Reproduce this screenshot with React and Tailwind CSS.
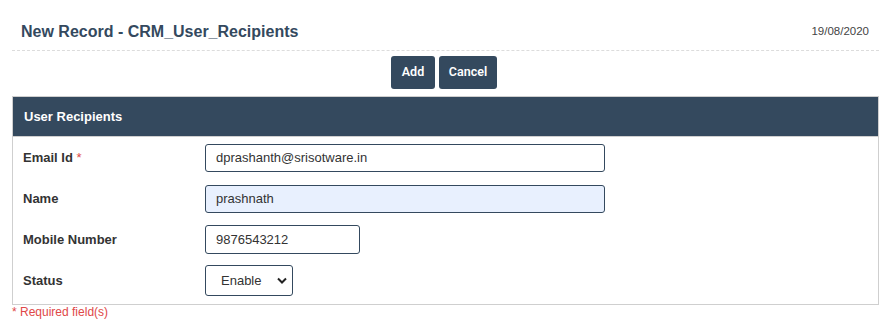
import { useState } from "react";

export default function App() {
  const [email, setEmail] = useState("dprashanth@srisotware.in");
  const [name, setName] = useState("prashnath");
  const [mobile, setMobile] = useState("9876543212");
  const [status, setStatus] = useState("Enable");

  return (
    <div className="w-[891px] min-h-[326px] bg-white font-['Liberation_Sans',Arial,sans-serif] px-3">
      {/* page title */}
      <div className="h-[51px] flex items-center justify-between border-b border-dashed border-[#dcdcdc] pt-[14px] pl-[9px] pr-[10px]">
        <h1 className="text-[16px] font-bold text-[#34495e]">New Record - CRM_User_Recipients</h1>
        <span className="text-[11.5px] text-[#444]">19/08/2020</span>
      </div>

      {/* actions */}
      <div className="flex justify-center gap-1 mt-[5px] pr-[3px]">
        <button className="h-[33px] w-[44px] rounded-[3px] bg-[#34495e] text-white text-[12.5px] font-semibold font-['Roboto',sans-serif]">
          Add
        </button>
        <button className="h-[33px] w-[58px] rounded-[3px] bg-[#34495e] text-white text-[12.5px] font-semibold font-['Roboto',sans-serif]">
          Cancel
        </button>
      </div>

      {/* panel */}
      <div className="mt-[7px] border border-[#cfcfcf]">
        <div className="h-[40px] bg-[#34495e] border-b border-[#cfcfcf] flex items-center pl-[11px]">
          <span className="text-white text-[13px] font-bold">User Recipients</span>
        </div>
        <div className="pb-[3px]">
          <Row label="Email Id" required>
            <input
              value={email}
              onChange={(e) => setEmail(e.target.value)}
              className="w-[400px] h-[28px] border border-[#34495e] rounded-[3px] px-[10px] text-[13px] text-[#333] outline-none"
            />
          </Row>
          <Row label="Name">
            <input
              value={name}
              onChange={(e) => setName(e.target.value)}
              className="w-[400px] h-[28px] border border-[#34495e] rounded-[3px] px-[10px] text-[13px] text-[#333] bg-[#e8f0fe] outline-none"
            />
          </Row>
          <Row label="Mobile Number">
            <input
              value={mobile}
              onChange={(e) => setMobile(e.target.value)}
              className="w-[155px] h-[29px] border border-[#34495e] rounded-[3px] px-[10px] text-[13px] text-[#333] outline-none"
            />
          </Row>
          <Row label="Status">
            <div className="relative w-[88px] h-[31px]">
              <select
                value={status}
                onChange={(e) => setStatus(e.target.value)}
                className="appearance-none w-full h-full border border-[#34495e] rounded-[3px] pl-[15px] text-[13px] text-[#333] bg-white outline-none"
              >
                <option>Enable</option>
                <option>Disable</option>
              </select>
              <svg
                className="absolute right-[6px] top-[12px] pointer-events-none"
                width="10"
                height="7"
                viewBox="0 0 10 7"
                fill="none"
                stroke="#222"
                strokeWidth="2"
              >
                <path d="M1 1.5 L5 5.5 L9 1.5" />
              </svg>
            </div>
          </Row>
        </div>
      </div>

      <p className="text-[12px] leading-[14px] text-[#e04848]">* Required field(s)</p>
    </div>
  );
}

function Row({ label, required, children }) {
  return (
    <div className="h-[41px] flex items-center pl-[10px]">
      <label className="w-[182px] text-[13px] font-bold text-[#333] pt-px">
        {label}
        {required && <span className="text-[#e04848] font-normal"> *</span>}
      </label>
      {children}
    </div>
  );
}
